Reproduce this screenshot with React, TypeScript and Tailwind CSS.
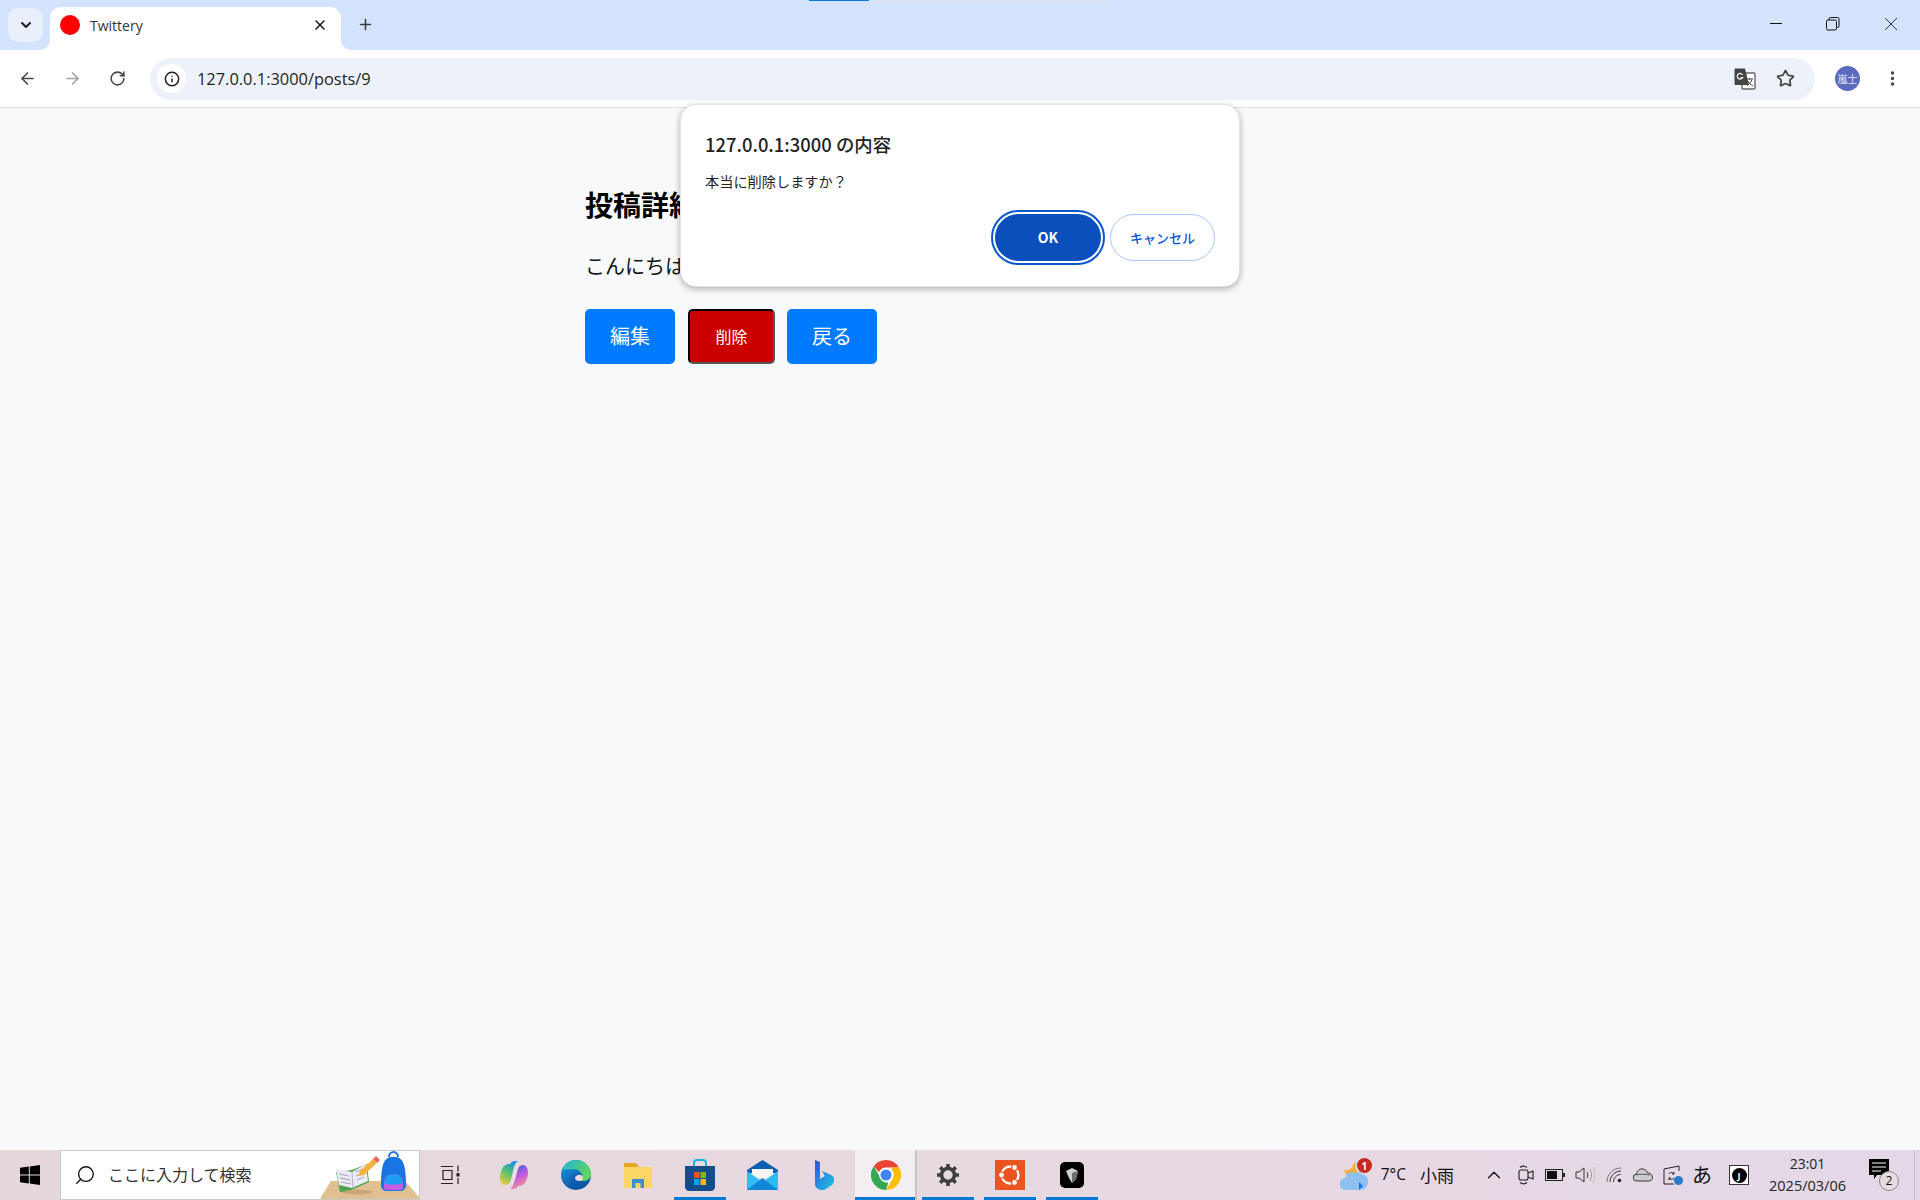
import React from "react";
import { ChevronDown, X, Plus, ArrowLeft, ArrowRight, RotateCw, Info, Star, EllipsisVertical, Search, ChevronUp } from "lucide-react";

const JP = "font-['Noto_Sans_CJK_JP','Noto_Sans',sans-serif]";

const WindowControls = () => (
  <div className="ml-auto flex items-start pr-[22px] pt-[17px] text-[#1f1f1f]">
    <svg width="14" height="14" viewBox="0 0 14 14" className="mr-[43px]"><path d="M1 6.500h12" stroke="#111" strokeWidth="1" /></svg>
    <svg width="14" height="14" viewBox="0 0 14 14" className="mr-[44px]" fill="none" stroke="#111"><rect x="0.500" y="3" width="10" height="10" rx="1.500" /><path d="M3 3V2a1.500 1.500 0 0 1 1.500-1.500h7A1.500 1.500 0 0 1 13 2v7a1.500 1.500 0 0 1-1.500 1.500h-1" /></svg>
    <svg width="14" height="14" viewBox="0 0 14 14" stroke="#333"><path d="M1 1l12 12M13 1L1 13" strokeWidth="1" /></svg>
  </div>
);

const TabStrip = () => (
  <div className="relative flex h-[50px] bg-[#d3e3fd]">
    <div className="absolute left-[809px] top-0 h-px w-[60px] bg-[#0078d4]" />
    <div className="absolute left-[869px] top-0 h-px w-[240px] bg-[#dcdfe4]" />
    <div className="ml-2 mt-2 flex h-[34px] w-[35px] items-center justify-center rounded-[10px] bg-[#e9f0fc]">
      <ChevronDown size={16} strokeWidth={3} className="text-[#1f1f1f]" />
    </div>
    <div className="relative ml-[7px] mt-[7px] flex h-[43px] w-[291px] items-center rounded-t-[11px] bg-white pb-[7px] pl-[10px]">
      <div className="absolute -left-[10px] bottom-0 h-[10px] w-[10px] bg-white"><div className="h-full w-full rounded-br-[10px] bg-[#d3e3fd]" /></div>
      <div className="absolute -right-[10px] bottom-0 h-[10px] w-[10px] bg-white"><div className="h-full w-full rounded-bl-[10px] bg-[#d3e3fd]" /></div>
      <div className="h-5 w-5 rounded-full bg-[#ff0000]" />
      <span className="ml-[10px] text-[14px] text-[#333] font-['Open_Sans',sans-serif]">Twittery</span>
      <X size={16} strokeWidth={2.500} className="ml-auto mr-[13px] text-[#1f1f1f]" />
    </div>
    <div className="ml-[16px] mt-[16px]">
      <Plus size={17} strokeWidth={2.200} className="text-[#3c3c3c]" />
    </div>
    <WindowControls />
  </div>
);

const TranslateIcon = () => (
  <svg width="22" height="22" viewBox="0 0 22 22">
    <rect x="8" y="5" width="13" height="16" rx="1" fill="#fff" stroke="#666" strokeWidth="1.400" />
    <path d="M1.500 0.500h9.500l4 16.500H1.500a1 1 0 0 1-1-1V1.500a1 1 0 0 1 1-1z" fill="#444" />
    <path d="M8.600 7a2.800 2.800 0 1 0 0 2.500H6.500" fill="none" stroke="#fff" strokeWidth="1.200" />
    <path d="M13 11h6M16 10v1.500M18 11.500c-1 3-3 5-5 6M14 13c1 2.500 3 4 5 5" stroke="#444" strokeWidth="1" fill="none" />
  </svg>
);

const Toolbar = () => (
  <div className="flex h-[57px] items-center rounded-t-[9px] bg-white">
    <ArrowLeft size={19} strokeWidth={2} className="ml-[18px] text-[#474747]" />
    <ArrowRight size={19} strokeWidth={2} className="ml-[26px] text-[#a3a3a3]" />
    <RotateCw size={17} strokeWidth={2.200} className="ml-[27px] text-[#474747]" />
    <div className="ml-[24px] flex h-[42px] w-[1665px] items-center rounded-full bg-[#edf2fa] pl-[7px] pr-[20px]">
      <div className="flex h-[29px] w-[29px] items-center justify-center rounded-full bg-white">
        <Info size={16} strokeWidth={2.200} className="text-[#1f1f1f]" />
      </div>
      <span className="ml-[11px] pt-[2px] text-[16.400px] text-[#1f1f1f] font-['Open_Sans',sans-serif]">127.0.0.1:3000/posts/9</span>
      <div className="ml-auto flex items-center gap-[20px]">
        <TranslateIcon />
        <Star size={19} strokeWidth={2.200} className="text-[#474747]" />
      </div>
    </div>
    <div className={`ml-[20px] flex h-[25px] w-[25px] items-center justify-center rounded-full bg-[#5c6bc0] text-[10px] text-[#e4e7f5] ${JP}`}>嵐士</div>
    <EllipsisVertical size={19} strokeWidth={2.400} className="ml-[23px] text-[#474747]" />
  </div>
);

const ConfirmDialog = () => (
  <div className={`absolute left-[680px] top-[104px] flex h-[183px] w-[560px] flex-col rounded-[16px] border border-[#e3e3e3] bg-white px-[24px] pt-[26px] shadow-[0_2px_6px_rgba(0,0,0,0.3)] ${JP}`}>
    <div className="text-[18.400px] font-medium leading-[26px] text-[#1f1f1f]">127.0.0.1:3000 の内容</div>
    <div className="mt-[13px] text-[14.200px] leading-[22px] text-[#1f1f1f]">本当に削除しますか？</div>
    <div className="mt-[22px] flex items-center justify-end gap-[9px]">
      <button className="flex h-[47px] w-[106px] items-center justify-center rounded-full bg-[#0b4fbd] text-[14px] font-bold text-white outline-2 outline-offset-2 outline-[#0b57d0]">OK</button>
      <button className="flex h-[47px] w-[105px] items-center justify-center rounded-full border border-[#a8c7fa] bg-white text-[13px] font-medium text-[#0b57d0]">キャンセル</button>
    </div>
  </div>
);

const PostPage = () => (
  <div className={`flex-1 bg-[#f8f9fa] ${JP}`}>
    <div className="mx-auto w-[750px] pt-[77px]">
      <h2 className="text-[28px] font-bold leading-[38px] text-black">投稿詳細</h2>
      <p className="mt-[29px] text-[20px] leading-[28px] text-[#111]">こんにちは</p>
      <div className="mt-[29px] flex gap-[13px]">
        <button className="h-[55px] w-[90px] rounded-[5px] bg-[#007bff] pb-[2px] text-[20px] text-white">編集</button>
        <button className="h-[55px] w-[87px] rounded-[5px] border-2 border-t-black border-l-black border-r-[#555] border-b-[#555] bg-[#cc0000] pb-[2px] text-[16px] text-white">削除</button>
        <button className="-ml-px h-[55px] w-[90px] rounded-[5px] bg-[#007bff] pb-[2px] text-[20px] text-white">戻る</button>
      </div>
    </div>
  </div>
);

const WinLogo = () => (
  <svg width="20" height="20" viewBox="0 0 20 20" fill="#000"><path d="M0 2.800l8.800-1.200v8H0zM9.800 1.400L20 0v9.600H9.800zM0 10.600h8.800v8L0 17.300zM9.800 10.600H20V20L9.800 18.600z" /></svg>
);

const StudyArt = () => (
  <svg width="98" height="50" viewBox="0 0 98 50" className="absolute bottom-0 right-0">
    <path d="M10 32h74l14 16v2H0v-2z" fill="#e0bf90" />
    <ellipse cx="36" cy="43" rx="15" ry="2.500" fill="#c9a67a" />
    <path d="M15 23l16-2 15-6 2 18-18 8-11 2z" fill="#4fa24e" />
    <path d="M15 20l16 3 14-8 2 17-16 7-13-3z" fill="#ebe9f3" />
    <path d="M31 23l1 16" stroke="#b5b3c6" />
    <path d="M18 25l10 2M19 29l10 2M20 33l10 2M35 23l7-3M35 27l7-3M36 31l7-3" stroke="#a5a3b6" />
    <path d="M37 27l2-5 13-12 4 4-13 12z" fill="#f4b340" />
    <path d="M52 10l3-3 4 4-3 3z" fill="#ee6a55" />
    <path d="M60 36c0-3 0-14 2-20 1-5 5-8 8-8h5c3 0 7 3 8 8 2 6 2 17 2 20 0 4-3 6-6 6H66c-3 0-6-2-6-6z" fill="#1b74e4" />
    <path d="M68 8c0-3 2-5 4.500-5s4.500 2 4.500 5" stroke="#1b74e4" strokeWidth="2" fill="none" />
    <path d="M63 35c0-7 4-10 9.500-10s9.500 3 9.500 10v3c0 2-1 3-3 3H66c-2 0-3-1-3-3z" fill="#c45fe0" />
    <path d="M63 34c1-6 4-9 9.500-9s8.500 3 9.500 9c-3 2-16 2-19 0z" fill="#1f9cf4" />
  </svg>
);

const TaskView = () => (
  <svg width="20" height="20" viewBox="0 0 20 20" fill="none" stroke="#222" strokeWidth="1.200">
    <path d="M1 1.500h12M1 18.500h12M3 5.500h9v9H3zM18 0.500v6M18 13v6" />
    <rect x="16.500" y="8" width="3" height="3.500" fill="#222" stroke="none" />
  </svg>
);

const CopilotIcon = () => (
  <svg width="30" height="30" viewBox="0 0 30 30">
    <defs>
      <linearGradient id="cpA" x1="0.700" y1="0" x2="0.200" y2="1"><stop offset="0" stopColor="#1a8fe8" /><stop offset="0.500" stopColor="#55c46c" /><stop offset="1" stopColor="#f5c63d" /></linearGradient>
      <linearGradient id="cpB" x1="0.300" y1="0" x2="0.700" y2="1"><stop offset="0" stopColor="#3d5fe0" /><stop offset="0.500" stopColor="#c85ade" /><stop offset="1" stopColor="#f4a07a" /></linearGradient>
    </defs>
    <path d="M11 4c1-2 3-3 5-3h3c-2 1-3 3-4 6l-3 12c-1 4-3 6-6 6-3 0-5-3-5-8 0-3 1-6 2-8 1-3 4-5 8-5z" fill="url(#cpA)" />
    <path d="M19 26c-1 2-3 3-5 3h-3c2-1 3-3 4-6l3-12c1-4 3-6 6-6 3 0 5 3 5 8 0 3-1 6-2 8-1 3-4 5-8 5z" fill="url(#cpB)" />
    <path d="M15 7l5-1-3.500 12c-.5 3-2 5-4 6l-2 .5c1.500-1 2.500-3 3-5z" fill="#f0dde6" opacity="0.750" />
  </svg>
);

const EdgeIcon = () => (
  <svg width="30" height="30" viewBox="0 0 30 30">
    <defs>
      <linearGradient id="edA" x1="0" y1="0" x2="1" y2="0.600"><stop offset="0" stopColor="#1fb4d8" /><stop offset="1" stopColor="#64d65a" /></linearGradient>
      <linearGradient id="edB" x1="0" y1="0" x2="0.600" y2="1"><stop offset="0" stopColor="#1b9de2" /><stop offset="1" stopColor="#0a4f9e" /></linearGradient>
    </defs>
    <circle cx="15" cy="15" r="15" fill="url(#edB)" />
    <path d="M1 10C3 4 8 0 15 0c8 0 15 6 15 14 0 4-3 7-7 7h-5c2-1 3-3 3-5 0-4-4-7-9-7-4 0-8 1-11 1z" fill="url(#edA)" />
    <path d="M16 13c4-1 6 1 6 4 0 2-2 3-4 4h8c-2 5-7 9-12 8.500-5-1-7-8-3-13 1-2 3-3 5-3.500z" fill="#0c5bab" opacity="0.550" />
    <path d="M17 15c2-1 5 0 5 3 0 1.500-1.500 3-4 3-2 0-4-1-4-3 0-1.500 1.500-2.500 3-3z" fill="#e9dbe2" />
  </svg>
);

const FolderIcon = () => (
  <svg width="30" height="30" viewBox="0 0 30 30">
    <path d="M1 3h12l3 4H1z" fill="#e5a823" />
    <rect x="1" y="7" width="28" height="21" rx="1" fill="#fbd665" />
    <path d="M9 28v-9h12v9h-3.500v-5h-5v5z" fill="#3b8ed0" />
  </svg>
);

const StoreIcon = () => (
  <svg width="30" height="32" viewBox="0 0 30 32">
    <path d="M9 9V4c0-2 1-3 3-3h6c2 0 3 1 3 3v5" fill="none" stroke="#19b3e6" strokeWidth="2" />
    <path d="M0 7h30v21c0 2-2 4-4 4H4c-2 0-4-2-4-4z" fill="#144d8a" />
    <rect x="9" y="13" width="5.500" height="6" fill="#f25022" />
    <rect x="15.500" y="13" width="5.500" height="6" fill="#7fba00" />
    <rect x="9" y="20" width="5.500" height="6" fill="#00a4ef" />
    <rect x="15.500" y="20" width="5.500" height="6" fill="#ffb900" />
  </svg>
);

const MailIcon = () => (
  <svg width="31" height="30" viewBox="0 0 31 30">
    <path d="M0 10L15.500 0 31 10v3H0z" fill="#0a5fb0" />
    <path d="M5 9h21v9H5z" fill="#f4f4f4" />
    <path d="M0 11l15.500 11L31 11v19H0z" fill="#2ebcf0" />
    <path d="M0 30l15.500-12L31 30z" fill="#1186d8" />
  </svg>
);

const BingIcon = () => (
  <svg width="20" height="30" viewBox="0 0 20 30">
    <defs><linearGradient id="bgA" x1="0" y1="0" x2="1" y2="1"><stop offset="0" stopColor="#2a55e0" /><stop offset="1" stopColor="#22c8e0" /></linearGradient></defs>
    <path d="M1 0l5 2v17l5-3-3-5 9 4c2 1 3 2 3 4v2c0 1-1 3-2 4l-6 4c-3 2-6 1-8 0-2-1-3-3-3-5z" fill="url(#bgA)" />
  </svg>
);

const ChromeIcon = () => (
  <svg width="30" height="30" viewBox="0 0 30 30">
    <circle cx="15" cy="15" r="15" fill="#fff" />
    <path d="M15 0a15 15 0 0 1 13 7.500H15a7.500 7.500 0 0 0-7 4.700L2.800 6.200A15 15 0 0 1 15 0z" fill="#ea4335" />
    <path d="M28 7.500A15 15 0 0 1 15 30l6.500-11.200a7.500 7.500 0 0 0 0-8 7 7 0 0 0-2-3.300z" fill="#fbbc04" />
    <path d="M2.800 6.200l6.500 11.300a7.500 7.500 0 0 0 8 4.900L15 30A15 15 0 0 1 2.800 6.200z" fill="#34a853" />
    <circle cx="15" cy="15" r="6.800" fill="#fff" />
    <circle cx="15" cy="15" r="5.500" fill="#4285f4" />
  </svg>
);

const GearIcon = () => (
  <svg width="24" height="24" viewBox="0 0 24 24" fill="none" stroke="#3f3f3f">
    <circle cx="12" cy="12" r="6.500" strokeWidth="3.600" />
    <path d="M12 1v4M12 19v4M1 12h4M19 12h4M4.200 4.200l2.800 2.800M17 17l2.800 2.800M19.800 4.200L17 7M7 17l-2.800 2.800" strokeWidth="3.600" />
  </svg>
);

const UbuntuIcon = () => (
  <svg width="30" height="30" viewBox="0 0 30 30">
    <rect width="30" height="30" fill="#e95420" />
    <circle cx="15" cy="15" r="8.500" fill="none" stroke="#fff" strokeWidth="2.400" />
    <circle cx="6.500" cy="15" r="3" fill="#fff" stroke="#e95420" strokeWidth="1.200" />
    <circle cx="19.500" cy="7.500" r="3" fill="#fff" stroke="#e95420" strokeWidth="1.200" />
    <circle cx="19.500" cy="22.500" r="3" fill="#fff" stroke="#e95420" strokeWidth="1.200" />
  </svg>
);

const BlackAppIcon = () => (
  <svg width="24" height="26" viewBox="0 0 24 26">
    <rect x="0" y="0" width="24" height="26" rx="5" fill="#000" />
    <path d="M6 9l6-3 6 3-2 8-4 4-3-5z" fill="#cfcfcf" />
    <path d="M12 11l6-2-2 8-4 4z" fill="#6f6f6f" />
  </svg>
);

const apps = [
  { key: "copilot", icon: <CopilotIcon />, bar: false },
  { key: "edge", icon: <EdgeIcon />, bar: false },
  { key: "folder", icon: <FolderIcon />, bar: false },
  { key: "store", icon: <StoreIcon />, bar: true },
  { key: "mail", icon: <MailIcon />, bar: false },
  { key: "bing", icon: <BingIcon />, bar: false },
  { key: "chrome", icon: <ChromeIcon />, bar: true, active: true },
  { key: "gear", icon: <GearIcon />, bar: true },
  { key: "ubuntu", icon: <UbuntuIcon />, bar: true },
  { key: "black", icon: <BlackAppIcon />, bar: true },
];

const WeatherIcon = () => (
  <div className="relative h-[34px] w-[32px]">
    <svg width="30" height="34" viewBox="0 0 30 34" className="absolute left-0 top-0">
      <path d="M4 12c3 1 7 0 9-5 1-2 2-3 3-3-1 5 0 9 2 10l-6 4c-4 0-7-2-8-6z" fill="#f3b13b" />
      <path d="M6 32a6 6 0 0 1-1-12c1-5 6-7 10-5 2-1 5-1 7 1 4 1 7 4 6 9-1 4-3 7-7 7z" fill="#8fc1f0" />
      <path d="M19 24l0 8 4-4z" fill="#1a73e8" />
    </svg>
    <div className="absolute right-0 top-0 flex h-[15px] w-[15px] items-center justify-center rounded-full bg-[#c42b1c] text-[10px] font-bold leading-none text-white font-['Open_Sans',sans-serif]">1</div>
  </div>
);

const SystemTray = () => (
  <div className="ml-auto flex h-full items-center text-[#111]">
    <div className="mr-[9px]"><WeatherIcon /></div>
    <span className="text-[15.500px] font-['Open_Sans',sans-serif]">7°C</span>
    <span className={`ml-[14px] text-[17px] ${JP}`}>小雨</span>
    <ChevronUp size={22} strokeWidth={1.400} className="ml-[29px] text-[#111]" />
    <svg width="16" height="22" viewBox="0 0 16 22" fill="none" stroke="#222" strokeWidth="1.100" className="ml-[13px]">
      <rect x="1" y="6" width="9" height="10" rx="2" />
      <path d="M10 9l5-2v8l-5-2M2 3.500c2-1.500 5-1.500 7 0M2 18.500c2 1.500 5 1.500 7 0" />
    </svg>
    <svg width="20" height="12" viewBox="0 0 20 12" className="ml-[11px]">
      <rect x="0.500" y="0.500" width="17" height="11" fill="none" stroke="#222" />
      <rect x="2" y="2" width="10" height="8" fill="#111" />
      <rect x="18" y="4" width="2" height="4" fill="#222" />
    </svg>
    <svg width="20" height="20" viewBox="0 0 20 20" fill="none" stroke="#333" className="ml-[10px]">
      <path d="M1 7h3l5-4v14l-5-4H1z" />
      <path d="M12 7c1 2 1 4 0 6" />
      <path d="M15 4c2 4 2 8 0 12" stroke="#999" />
      <path d="M18 2c2.500 5 2.500 11 0 16" stroke="#bbb" />
    </svg>
    <svg width="16" height="16" viewBox="0 0 16 16" fill="none" stroke="#333" className="ml-[11px]">
      <path d="M1 15c0-8 6-14 14-14" stroke="#777" />
      <path d="M4 15c0-6 5-11 11-11" />
      <path d="M7.500 15c0-4 3-7.500 7-7.500" />
      <circle cx="13.500" cy="13.500" r="1.800" fill="#222" stroke="none" />
    </svg>
    <svg width="20" height="14" viewBox="0 0 20 14" className="ml-[11px]">
      <path d="M4 13a3.500 3.500 0 0 1-.5-7C4 2.500 7 .5 10 1c2.500.5 4 2 4.500 4 3 0 5 2 5 4.500S17.500 13 15 13z" fill="#ccc" stroke="#333" />
      <path d="M3 7c3-1 10-1 14 0" stroke="#555" fill="none" />
    </svg>
    <div className="relative ml-[10px] h-[20px] w-[20px]">
      <svg width="20" height="20" viewBox="0 0 20 20" fill="none" stroke="#222">
        <path d="M1 4l15-3v5M1 4v15h10" />
        <path d="M6 9c1-2 4-2 5 0M11 13c-1 2-4 2-5 0M11 7v2h-2M6 15v-2h2" />
      </svg>
      <div className="absolute bottom-0 right-0 h-[9px] w-[9px] rounded-full bg-[#2b78c8]" />
    </div>
    <span className={`ml-[9px] text-[20px] leading-none ${JP}`}>あ</span>
    <div className="ml-[17px] flex h-[20px] w-[20px] items-center justify-center border border-[#333] bg-white">
      <div className="flex h-[15px] w-[15px] items-center justify-center rounded-full bg-black text-[9px] font-bold leading-none text-white font-['Open_Sans',sans-serif]">J</div>
    </div>
    <div className="ml-[21px] flex w-[75px] flex-col items-center leading-[22px] text-[#222] font-['Open_Sans',sans-serif]">
      <span className="text-[14px]">23:01</span>
      <span className="text-[14.500px]">2025/03/06</span>
    </div>
    <div className="relative ml-[24px] mr-[21px] h-[32px] w-[30px]">
      <svg width="20" height="20" viewBox="0 0 20 20" className="absolute left-0 top-0">
        <path d="M0 0h20v16H8l-3 4v-4H0z" fill="#000" />
        <path d="M3 4h14M3 8h14M3 12h9" stroke="#fff" strokeWidth="1" />
      </svg>
      <div className="absolute bottom-0 right-0 flex h-[20px] w-[20px] items-center justify-center rounded-full border border-[#888] bg-[#e4dce2] text-[12px] text-[#111] font-['Open_Sans',sans-serif]">2</div>
    </div>
    <div className="absolute right-[5px] top-0 h-full w-px bg-[#c8c0c8]" />
  </div>
);

const Taskbar = () => (
  <div className="relative flex h-[50px] items-stretch bg-gradient-to-r from-[#e6d8da] via-[#e7d9e0] to-[#e4d8e8]">
    <div className="flex w-[60px] items-center justify-center"><WinLogo /></div>
    <div className={`relative flex w-[360px] items-center border border-[#c9c9c9] bg-white pl-[13px] ${JP}`}>
      <Search size={22} strokeWidth={1.500} className="-scale-x-100 text-[#111]" />
      <span className="mb-[2px] ml-[12px] text-[16px] text-[#333]">ここに入力して検索</span>
      <StudyArt />
    </div>
    <div className="flex w-[59px] items-center justify-center"><TaskView /></div>
    <div className="w-[4px]" />
    {apps.map((app) => (
      <div key={app.key} className="flex w-[62px] justify-center">
        <div className={`relative flex w-[52px] items-center justify-center ${app.active ? "w-[62px] border-r-2 border-[#c9c1c7] bg-[#f3eef1] pl-[2px]" : ""}`}>
          {app.icon}
          {app.bar && <div className="absolute bottom-0 left-0 right-0 h-[3px] bg-[#0078d4]" />}
        </div>
      </div>
    ))}
    <SystemTray />
  </div>
);

export default function App() {
  return (
    <div className="relative flex h-[1200px] w-[1920px] flex-col overflow-hidden bg-white">
      <TabStrip />
      <Toolbar />
      <div className="h-px bg-[#dfe1e3]" />
      <PostPage />
      <ConfirmDialog />
      <Taskbar />
    </div>
  );
}
